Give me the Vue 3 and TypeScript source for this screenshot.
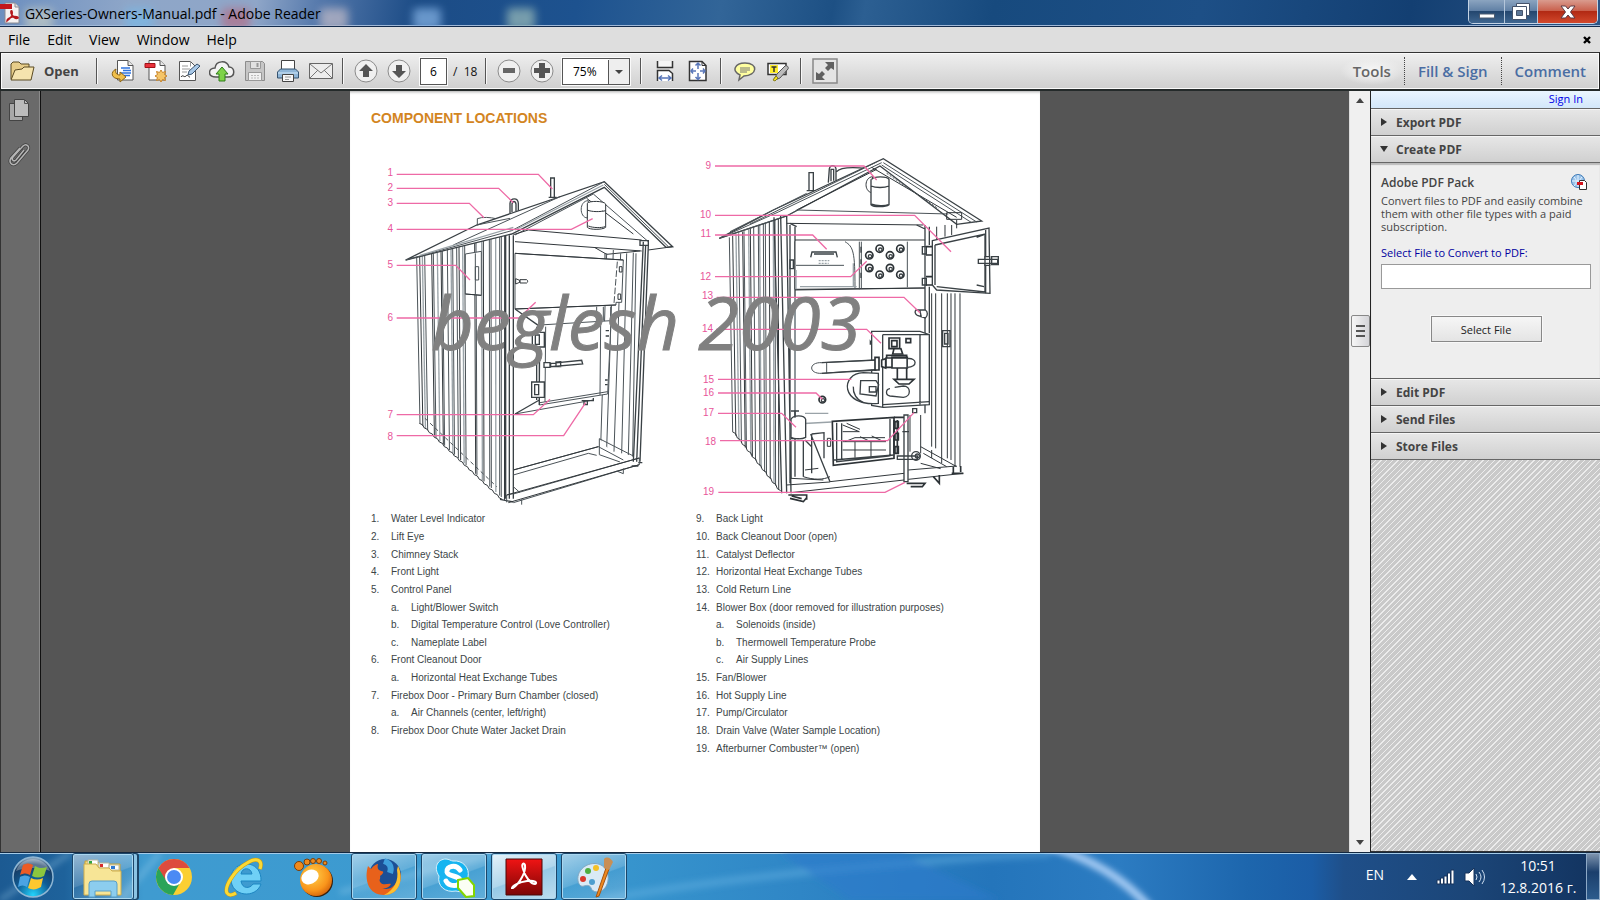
<script setup lang="ts">
import { ref } from 'vue'

type Line = [number, number, number, number]
interface Entry { mark: string; text: string; sub?: boolean }
interface Callout { n: number; x: number; y: number; pts: string }

const menus: string[] = ['File', 'Edit', 'View', 'Window', 'Help']
const page = ref('6')
const zoomLevel = ref('75%')
const fileName = ref('')

const e = (mark: string, text: string, sub = false): Entry => ({ mark, text, sub })

const leftList: Entry[] = [
  e('1.', 'Water Level Indicator'),
  e('2.', 'Lift Eye'),
  e('3.', 'Chimney Stack'),
  e('4.', 'Front Light'),
  e('5.', 'Control Panel'),
  e('a.', 'Light/Blower Switch', true),
  e('b.', 'Digital Temperature Control (Love Controller)', true),
  e('c.', 'Nameplate Label', true),
  e('6.', 'Front Cleanout Door'),
  e('a.', 'Horizontal Heat Exchange Tubes', true),
  e('7.', 'Firebox Door - Primary Burn Chamber (closed)'),
  e('a.', 'Air Channels (center, left/right)', true),
  e('8.', 'Firebox Door Chute Water Jacket Drain'),
]
const rightList: Entry[] = [
  e('9.', 'Back Light'),
  e('10.', 'Back Cleanout Door (open)'),
  e('11.', 'Catalyst Deflector'),
  e('12.', 'Horizontal Heat Exchange Tubes'),
  e('13.', 'Cold Return Line'),
  e('14.', 'Blower Box (door removed for illustration purposes)'),
  e('a.', 'Solenoids (inside)', true),
  e('b.', 'Thermowell Temperature Probe', true),
  e('c.', 'Air Supply Lines', true),
  e('15.', 'Fan/Blower'),
  e('16.', 'Hot Supply Line'),
  e('17.', 'Pump/Circulator'),
  e('18.', 'Drain Valve (Water Sample Location)'),
  e('19.', 'Afterburner Combuster™ (open)'),
]

const frontCallouts: Callout[] = [
  { n: 1, x: 393, y: 176, pts: '170,253 595,253 637,297' },
  { n: 2, x: 393, y: 191, pts: '170,295 476,295 520,338' },
  { n: 3, x: 393, y: 206, pts: '170,340 388,340 432,383' },
  { n: 4, x: 393, y: 232, pts: '170,418 694,418 758,386' },
  { n: 5, x: 393, y: 268, pts: '170,526 347,526 390,570' },
  { n: 6, x: 393, y: 321, pts: '170,684 537,684 587,637' },
  { n: 7, x: 393, y: 418, pts: '170,974 580,974 630,928' },
  { n: 8, x: 393, y: 440, pts: '170,1037 671,1037 737,938' },
]
const backCallouts: Callout[] = [
  { n: 9, x: 711, y: 169, pts: '75,108 522,108 560,150' },
  { n: 10, x: 711, y: 218, pts: '75,256 674,256 783,365' },
  { n: 11, x: 711, y: 237, pts: '75,315 368,315 410,358' },
  { n: 12, x: 711, y: 280, pts: '75,440 482,440 530,394' },
  { n: 13, x: 713, y: 299, pts: '80,502 642,502 690,548' },
  { n: 14, x: 713, y: 332, pts: '78,598 530,598 573,640' },
  { n: 15, x: 714, y: 383, pts: '84,748 484,748' },
  { n: 16, x: 714, y: 396, pts: '84,789 378,789 397,808' },
  { n: 17, x: 714, y: 416, pts: '84,850 275,850 318,892' },
  { n: 18, x: 716, y: 445, pts: '90,932 593,932 672,848' },
  { n: 19, x: 714, y: 495, pts: '85,1087 585,1087 645,1057' },
]

// Corrugated side walls: each x becomes a near-vertical rib between the eave and the sill.
const ribs = (xs: number[], x0: number, top: number, slopeTop: number, foot: number, squeeze: number, slopeFoot: number): Line[] =>
  xs.map((x) => {
    const d = x - x0
    return [x, top - d * slopeTop, x + 10 - d * squeeze, foot + d * slopeFoot]
  })

const frontRibs = ribs([230, 239, 247, 254, 275, 280, 292, 303, 307, 322, 333, 338, 350, 357, 368, 374, 404, 408, 425, 430, 448, 453, 467, 479, 484, 494], 230, 500, 0.24, 1000, 0.04, 0.87)
const backRibs = ribs([118, 128, 138, 146, 158, 162, 176, 181, 191, 205, 209, 220, 226, 238, 250, 255, 265], 118, 322, 0.42, 905, 0.06, 1.18)
const frontZig = Array.from({ length: 17 }, (_, i) => `${238 + i * 15},${1000 + i * 14} ${247 + i * 15},${1004 + i * 14}`).join(' ')
const backZig = Array.from({ length: 10 }, (_, i) => `${127 + i * 15},${905 + i * 19} ${137 + i * 15},${911 + i * 19}`).join(' ')
const tubes: [number, number][] = [[538, 376], [569, 356], [600, 376], [631, 356], [538, 414], [569, 434], [600, 414], [631, 434]]
</script>

<template>
  <div class="desktop">
    <header class="titlebar">
      <i class="glow g1"></i><i class="glow g2"></i><i class="glow g3"></i><i class="glow g4"></i><i class="glow g5"></i><i class="glow g6"></i>
      <svg class="doc-icon" width="21" height="22" viewBox="0 0 21 22">
        <path d="M5 1h10l4 4v16H5z" fill="#f4f1f1" stroke="#8a8a92" />
        <path d="M15 1v4h4" fill="#ddd" stroke="#8a8a92" />
        <path d="M0 2h12v5H0z" fill="#c3161c" />
        <path d="M7 19c4-3 6-7 5-10-1-1-2 1 0 4 2 3 4 4 6 3 1-1-3-2-6-1-3 1-5 3-5 4z" fill="none" stroke="#b5161b" stroke-width="1.5" />
      </svg>
      <h1>GXSeries-Owners-Manual.pdf - Adobe Reader</h1>
      <div class="win-buttons">
        <button aria-label="Minimize" class="wb"><svg width="18" height="18" viewBox="0 0 18 18"><rect x="1.500" y="11" width="15" height="4" fill="#fff" stroke="#4b5a70" /></svg></button>
        <button aria-label="Restore" class="wb"><svg width="20" height="20" viewBox="0 0 20 20"><path d="M5.500 1.500h13v12h-13z" fill="#fff" stroke="#46536a" /><path d="M1.500 4.500h14v13h-14z" fill="#fff" stroke="#46536a" /><path d="M5.500 8.500h6v5h-6z" fill="#5d7796" stroke="#46536a" /></svg></button>
        <button aria-label="Close" class="wb close"><svg width="20" height="18" viewBox="0 0 20 18"><path d="M3 3h4.500l2.500 3 2.500-3H17l-4.500 6L17 15h-4.500L10 12l-2.500 3H3l4.500-6z" fill="#fff" stroke="#5a3a44" /></svg></button>
      </div>
    </header>

    <nav class="menubar">
      <button v-for="m in menus" :key="m">{{ m }}</button>
      <button class="doc-close" aria-label="Close document"><svg width="8" height="8" viewBox="0 0 8 8"><path d="M1 1l6 6M7 1L1 7" stroke="#000" stroke-width="2.400" /></svg></button>
    </nav>

    <div class="toolbar">
      <button class="open">
        <svg width="26" height="24" viewBox="0 0 26 24"><path d="M2 20V5l2-2h6l2 2h8v4" fill="#e7cd8a" stroke="#5b4a22" /><path d="M2 21l4-10 7-1 2-2h10l-3 13z" fill="#f5e3ae" stroke="#5b4a22" /></svg>
        <span>Open</span>
      </button>
      <i class="sep"></i>
      <div class="tools">
        <button aria-label="Convert"><svg width="24" height="24" viewBox="0 0 24 24"><path d="M6.500 1.500H17l5 5V21H6.500z" fill="#fff" stroke="#555" /><path d="M17 1.500V6.500h5" fill="#e7e7e7" stroke="#555" /><path d="M10 9h9M12 11.500h8M10 14h10M13 16.500h6" stroke="#2f74e0" stroke-width="1.500" /><path d="M5 10c-6 3-5 10 4 10v3l6-5-6-5v3c-4 0-5-3-4-6z" fill="#f0c04c" stroke="#8b6216" /></svg></button>
        <button aria-label="Create PDF"><svg width="24" height="24" viewBox="0 0 24 24"><path d="M5 1.500h11l5 5V21H5z" fill="#fff" stroke="#555" /><path d="M16 1.500v5h5" fill="#e7e7e7" stroke="#555" /><path d="M1 4.500h10v4H1z" fill="#e8303a" stroke="#a01218" /><path d="M17 11l1.500 2.500 3-1-1 3 2.500 1.500-2.500 1.500 1 3-3-1L17 23l-1.500-2.500-3 1 1-3L11 17l2.500-1.500-1-3 3 1z" fill="#f5c568" stroke="#c9852a" /></svg></button>
        <button aria-label="Sign"><svg width="24" height="24" viewBox="0 0 24 24"><path d="M2.500 2.500h11l5 5v14h-16z" fill="#fff" stroke="#555" /><path d="M13.500 2.500v5" stroke="#999" /><path d="M5 7h6M5 10h8M5 13h5" stroke="#999" /><path d="M4 18c2-3 3 1 5-1s2 1 4 1" fill="none" stroke="#222" /><path d="M11 16l1-4 8-7 3 2-8 8z" fill="#a9c9e8" stroke="#39536f" /></svg></button>
        <button aria-label="Upload"><svg width="26" height="24" viewBox="0 0 26 24"><path d="M7 18c-9 0-8-9-1-9 1-8 12-8 14-1 6 0 7 10-1 10z" fill="#f3f3f3" stroke="#555" stroke-width="1.500" /><path d="M13 8l6 7h-3v7h-6v-7H7z" fill="#7ed348" stroke="#2f7c1b" /></svg></button>
        <button aria-label="Save"><svg width="24" height="24" viewBox="0 0 24 24"><path d="M2.500 2.500h17l2 2v17h-19z" fill="#c6c6c6" stroke="#8c8c8c" /><path d="M7.500 2.500h10v7h-10z" fill="#e2e2e2" stroke="#999" /><path d="M13.500 4v4h2V4z" fill="#999" /><path d="M5.500 13.500h13v8h-13z" fill="#f1f1f1" stroke="#999" /><path d="M8 16.500h8M8 19h8" stroke="#bbb" stroke-dasharray="2 1" /></svg></button>
        <button aria-label="Print"><svg width="24" height="24" viewBox="0 0 24 24"><path d="M5.500 1.500h13v9h-13z" fill="#fff" stroke="#444" /><path d="M1.500 13l3-3h15l3 3v6h-21z" fill="#8fb6d8" stroke="#35536f" /><path d="M2 14h20" stroke="#d3e8f8" /><path d="M6.500 15.500h11v7h-11z" fill="#f7f7f7" stroke="#444" /><path d="M9 18h6M9 20.500h4" stroke="#999" /></svg></button>
        <button aria-label="Email"><svg width="26" height="24" viewBox="0 0 26 24"><path d="M1.500 4.500h23v15h-23z" fill="#ededed" stroke="#666" /><path d="M2 5l11 9 11-9M2 19l8-8M24 19l-8-8" fill="none" stroke="#777" /></svg></button>
      </div>
      <i class="sep"></i>
      <div class="tools">
        <button aria-label="Previous page"><svg width="24" height="24" viewBox="0 0 24 24"><circle cx="12" cy="12" r="11" fill="#f0f0f0" stroke="#8b8b8b" /><path d="M12 5l7 7h-4v6H9v-6H5z" fill="#555" /></svg></button>
        <button aria-label="Next page"><svg width="24" height="24" viewBox="0 0 24 24"><circle cx="12" cy="12" r="11" fill="#f0f0f0" stroke="#8b8b8b" /><path d="M12 19l7-7h-4V6H9v6H5z" fill="#555" /></svg></button>
      </div>
      <input v-model="page" class="page-no" aria-label="Page number" />
      <span class="page-of">/&nbsp; 18</span>
      <i class="sep"></i>
      <div class="tools">
        <button aria-label="Zoom out"><svg width="24" height="24" viewBox="0 0 24 24"><circle cx="12" cy="12" r="11" fill="#f0f0f0" stroke="#8b8b8b" /><path d="M6 9h12v5H6z" fill="#666" /></svg></button>
        <button aria-label="Zoom in"><svg width="24" height="24" viewBox="0 0 24 24"><circle cx="12" cy="12" r="11" fill="#f0f0f0" stroke="#8b8b8b" /><path d="M4 9h5V4h6v5h5v5h-5v5H9v-5H4z" fill="#555" /></svg></button>
      </div>
      <div class="zoom">
        <select v-model="zoomLevel" aria-label="Zoom level"><option>75%</option><option>100%</option></select>
        <svg width="22" height="24" viewBox="0 0 22 24"><path d="M0 0v24" stroke="#555" stroke-width="2" /><path d="M7 10h8l-4 4z" fill="#444" /></svg>
      </div>
      <i class="sep wide"></i>
      <div class="tools">
        <button aria-label="Fit width"><svg width="18" height="24" viewBox="0 0 18 24"><path d="M1.500 2v6.500h15V2" fill="#f5f5f5" stroke="#333" stroke-width="1.500" /><path d="M1.500 22V11.500H13l3.500 3V22" fill="#fff" stroke="#333" stroke-width="1.500" /><path d="M3 19h12M6 16.500L3 19l3 2.500M12 16.500l3 2.500-3 2.500" fill="none" stroke="#5876b8" stroke-width="1.500" /></svg></button>
        <button aria-label="Fit page"><svg width="20" height="24" viewBox="0 0 20 24"><path d="M1.500 2.500H14l4 4v15H1.500z" fill="#fff" stroke="#333" stroke-width="1.500" /><path d="M14 2.500v4h4" fill="none" stroke="#333" /><path d="M10 4v6M10 14v6M3 12h5M12 12h5M7.500 6.500L10 4l2.500 2.500M7.500 18l2.500 2.500 2.500-2.500M5 9.500L3 12l2 2.500M15 9.500l2 2.500-2 2.500" fill="none" stroke="#5876b8" stroke-width="1.500" /></svg></button>
      </div>
      <i class="sep wide"></i>
      <div class="tools">
        <button aria-label="Comment note"><svg width="22" height="24" viewBox="0 0 22 24"><path d="M11 4c14 0 12 13-1 13l-5 4 1-5C-3 12 1 4 11 4z" fill="#ffffa0" stroke="#666" stroke-width="1.500" /><path d="M6 9h10M6 11h10M6 13h7" stroke="#777" /></svg></button>
        <button aria-label="Highlight text"><svg width="24" height="24" viewBox="0 0 24 24"><path d="M2 4.500h18v11H2z" fill="#fff" stroke="#333" stroke-width="1.500" /><path d="M4 6h8v8H4z" fill="#ffee2e" /><path d="M5.500 8h5M8 8v5" stroke="#333" stroke-width="1.500" /><path d="M8 20l3-5 8-8c2-1 4 1 3 3l-8 9-5 2z" fill="#bbb" stroke="#555" /><path d="M7 21l3-4 2 2-3 3z" fill="#f6e020" stroke="#86801c" /></svg></button>
      </div>
      <i class="sep wide"></i>
      <div class="tools">
        <button aria-label="Read mode"><svg width="26" height="26" viewBox="0 0 26 26"><path d="M1 1h24v24H1z" fill="#e4e4e4" stroke="#888" stroke-width="1.500" /><path d="M22 4v8l-3-2-3 3-3-3 3-3-3-3zM4 22v-8l3 2 3-3 3 3-3 3 3 3z" fill="#606060" /></svg></button>
      </div>
      <div class="modes">
        <button class="active">Tools</button><button>Fill &amp; Sign</button><button>Comment</button>
      </div>
    </div>

    <main class="workspace">
      <aside class="rail">
        <button aria-label="Page thumbnails"><svg width="24" height="26" viewBox="0 0 24 26"><path d="M2.500 6.500h13v17h-13z" fill="#a8a8a8" stroke="#444" /><path d="M7.500 2.500h10l4 4v13h-14z" fill="#bcbcbc" stroke="#444" /><path d="M17.500 2.500v4h4" fill="none" stroke="#555" /></svg></button>
        <button aria-label="Attachments"><svg width="24" height="26" viewBox="0 0 24 26"><path d="M17 9l-8 10c-2 2-5 0-3-3L16 5c3-3 7 0 5 4L10 22c-4 4-9 0-6-5l9-10" fill="none" stroke="#3f3f3f" stroke-width="3" /><path d="M17 9l-8 10c-2 2-5 0-3-3L16 5c3-3 7 0 5 4L10 22c-4 4-9 0-6-5l9-10" fill="none" stroke="#b5b5b5" stroke-width="1.500" /></svg></button>
      </aside>

      <div class="canvas">
        <article class="sheet">
          <h2>COMPONENT LOCATIONS</h2>
          <svg class="figure" viewBox="350 140 690 370" role="img" aria-label="Front and back views of the furnace">
            <g class="ink" transform="translate(340 90) scale(0.33333)">
              <line v-for="(l, i) in frontRibs" :key="i" :x1="l[0]" :y1="l[1]" :x2="l[2]" :y2="l[3]" :class="{ bold: i % 3 === 1, soft: i % 4 === 2 }" />
              <polyline :points="frontZig" class="bold" />
              <path d="M255 985L470 1190" stroke-dasharray="12 9" />
              <path class="paper" d="M376 492L424 484 424 616 376 612zM406 530h10v40h-10zM406 490v122" />
              <path d="M376 612l48 4" class="bold" />
              <path d="M412 408v-22c15-6 40-4 56 0" />
              <path d="M510 372v-32c2-18 24-18 25 0v28M516 366v-24c2-10 10-10 12 0v22" class="heavy" />
              <path class="paper heavy" d="M632 322v-58h11v58zM626 322h24" />
              <path class="paper heavy" d="M197 510L410 405 793 275 998 470 978 472 793 292 515 432z" />
              <path d="M197 510L515 422 793 275M340 465L660 320M410 405L510 385M793 283L985 470M760 312L925 455M525 435L760 312" />
              <path class="soft" d="M525 420L790 285M240 496L520 412" />
              <path class="bold" d="M740 325L880 432M925 480L998 470" />
              <path class="paper" d="M745 332c-28 0-28 50-3 52z" />
              <path class="paper bold" d="M742 340c4-8 50-8 55 2v70c-10 8-48 8-55 0zM742 360c12 6 40 6 55 2M745 408c14 6 40 6 50 2" />
              <path d="M565 420L905 450M525 455L905 483M565 420l-45 14M765 473l35 20 100-10M795 490v18" class="bold" />
              <path class="heavy" d="M497 436v790M520 436v790M508 436v790M480 1228l40 8" />
              <path d="M910 455L880 1115M925 465L900 1115M917 465L890 1115" class="heavy" />
              <path d="M900 452h25v14h-25zM895 1118h12M875 1128h20" class="heavy" />
              <path d="M800 490L782 1070M820 480L800 1075M842 490L822 1085M860 490L845 1090M880 488L865 1095M888 490L878 1100M770 650v42M790 650v42M812 650v42" />
              <path class="paper" d="M525 490L850 510 845 637 828 637 828 645 525 657z" />
              <path d="M525 490L850 510M525 657L828 645" class="bold" />
              <path d="M832 515L822 640" stroke-dasharray="20 6" />
              <path d="M838 530h8v16h-8zM834 612h8v16h-8z" class="bold" />
              <path class="paper bold" d="M527 566l12 5v6l-12 5zM540 569h20c4 2 4 8 0 10h-20z" />
              <path class="paper" d="M600 705L813 692 803 912 598 945z" />
              <path d="M782 700L780 915M525 972L760 930M600 938L803 905M617 710L615 935" />
              <path class="heavy" d="M525 657L600 710M525 972L598 930M590 710V930M598 705V945" />
              <path class="paper heavy" d="M577 727h36v44h-36zM586 735h12v28h-12zM575 876h38v46h-38zM584 884h12v30h-12z" />
              <path class="paper heavy" d="M612 818h18v14h-18zM632 820L725 811 728 822 632 830zM648 816h14v14h-14z" />
              <path d="M797 722h10M797 738h10M795 870h8M795 884h8M725 932h35v-8M732 932v12h10v-12" class="heavy" />
              <path class="paper" d="M520 1140L775 1070M520 1155L745 1090 770 1096M520 1212L898 1104M520 1238L898 1124M898 1104v20M778 1046L880 1098M778 1046v48L840 1116M775 1070L850 1110M500 1215l20-4M500 1215v22" />
              <path d="M520 1140L775 1070M500 1215L898 1104M505 1238L898 1124" class="bold" />
              <path d="M545 1228v16M850 1135v16l-20-8M520 1190l20 18" />
            </g>

            <g class="ink" transform="translate(690 130) scale(0.33333)">
              <line v-for="(l, i) in backRibs" :key="i" :x1="l[0]" :y1="l[1]" :x2="l[2]" :y2="l[3]" :class="{ bold: i % 3 === 1, soft: i % 4 === 2 }" />
              <polyline :points="backZig" class="bold" />
              <path d="M415 158l3-42c3-12 17-12 20 0v36M423 154v-36h8v34M440 125c10-14 50-14 90-10" class="heavy" />
              <path class="paper heavy" d="M357 182v-54h13v54zM350 182h26" />
              <path class="paper heavy" d="M88 325L250 240 580 86 875 273 800 283 570 108 290 258z" />
              <path d="M88 325L265 246 575 98M88 325L290 258M120 305L350 190M180 282L560 96M580 98L860 276M575 105L845 278" />
              <path d="M545 112L800 262M320 240L560 118" class="bold" />
              <path d="M590 130L745 236" stroke-dasharray="6 5" />
              <path d="M320 240L775 252M290 258l40-22" />
              <path class="paper bold" d="M548 140c-26 2-26 44-3 48z" />
              <path class="paper heavy" d="M545 148c6-10 46-10 52 0v76c-10 8-46 8-54 0v-76M543 168c14 6 40 6 54 0M545 222c14 6 40 6 50 2" />
              <path d="M770 248h45v20h-45z" class="bold" />
              <path d="M252 262L275 1090M272 258L290 1090M290 258L303 1090M300 285V1060M315 290V1040" class="heavy" />
              <path class="paper bold" d="M290 280L700 285M315 330H705M315 334V478L705 474M315 480L705 474" />
              <path d="M300 280l20 10M680 285l25 12M705 285V850M718 290V345M718 470V610" class="heavy" />
              <path d="M318 406H462M465 335c25 15 30 30 30 140M508 335V478M514 335V475M652 335V472" />
              <path class="soft" d="M318 420V478M330 470H500M315 500V840M490 400V470" />
              <path class="heavy" d="M362 382l4-16h72l4 16M364 376l-2 6M372 372h60M513 350v18M513 388v14M513 428v16" />
              <path d="M386 392h32M386 400h30" class="soft" stroke-dasharray="6 3" />
              <g v-for="(t, i) in tubes" :key="i">
                <circle :cx="t[0]" :cy="t[1]" r="11" class="thick" /><circle :cx="t[0] + 2" :cy="t[1] + 3" r="5" class="heavy" />
              </g>
              <path d="M300 390h10v26h-10zM697 350h12v22h-12zM697 445h12v20h-12z" class="heavy" />
              <path d="M725 490V950M737 490V955M755 490V975M772 490V985M783 490V990M795 490V1010M810 490V1010M740 290v40M765 285v35M785 285v30M800 270v25" class="bold" />
              <path d="M758 602h22v48h-22zM764 610h10v32h-10z" class="heavy" />
              <path class="paper heavy" d="M727 332L897 294 900 490 740 480 727 465z" />
              <path d="M735 345L885 312 885 484M740 470L885 486M887 300V490M735 345v120M860 322l22-8M860 465l22 5" class="heavy" />
              <path d="M708 350h18M708 375h18M708 440h18M708 465h18" class="thick" />
              <path class="paper heavy" d="M865 388h58v12h-58zM885 380h14v26h-14zM905 380h20v24h-20z" />
              <path class="paper heavy" d="M678 540l28 0c8 4 8 18 0 24l-24-8c-8-4-8-12-4-16zM690 542l4 20" />
              <path class="paper heavy" d="M545 604H690L718 614V824L580 832 545 826z" />
              <path d="M578 614L718 614M578 614V832M690 614V824M600 604h30M580 824L718 815M545 640l-4-6v10" class="heavy" />
              <path class="paper thick" d="M597 624h32v32h-32zM605 632h16v18h-16zM648 626h14v12h-14zM612 656l-4 16h30l-6-18" />
              <path class="paper" d="M395 698L560 690V718L395 730c-40 2-40-34 0-32zM410 698v32" />
              <path d="M395 698L560 690M395 730L560 720" class="heavy" />
              <path class="paper thick" d="M555 682h12v38h-12zM575 690l12-4v28l-12-4zM588 684h18v28h-18zM606 682h46v32h-46zM590 676h60v8h-60zM622 714h28v34h-28zM612 748h60l-15 14h-30z" />
              <path class="paper heavy" d="M652 686c30-4 32 26 0 26zM600 776c-14 2-14 20 0 22l40 4c24-2 24-34 0-34l-26 4" />
              <path class="paper heavy" d="M565 730V820C450 830 450 730 520 728z" />
              <path d="M490 770c-2 20 10 40 30 48M512 752h46l8 12-8 34-48-6zM538 770h20v16h-20z" class="heavy" />
              <circle cx="397" cy="809" r="10" class="thick" /><circle cx="399" cy="811" r="5" class="heavy" />
              <path d="M668 836h12v12h-12z" class="heavy" />
              <path d="M315 882L425 876M345 850h70" class="soft" />
              <path class="paper heavy" d="M303 868c6-14 40-14 44 0v54c-10 6-36 6-44 0zM303 843h24M315 843v20M303 926h24" />
              <path d="M303 930V1045M340 930V1040M362 912L420 1055M365 912L402 908V985M365 912V1030M345 930l20 20" class="heavy" />
              <path d="M412 925h10v24h-10z" class="bold" />
              <path class="paper thick" d="M427 874L612 862V985L430 1006z" />
              <path d="M440 878V995L600 978V866M455 880V988M430 990L612 975" class="heavy" />
              <path d="M458 935h130M458 960h130M495 935v48M543 935v45M465 935l30-12h90M458 885l50 20h-50M470 880l40 18M510 920l30 14M545 918l30 14" class="bold" />
              <path class="thick" d="M612 862h30M612 870v100M622 870v100M615 875h10v20h-10zM615 910h10v20h-10zM615 950h10v20h-10z" />
              <path class="paper heavy" d="M642 855h12v200h-12zM637 905h20M622 978h60v10h-60z" />
              <circle cx="678" cy="978" r="13" class="heavy" /><circle cx="682" cy="978" r="6" class="heavy" />
              <path d="M692 855V970M660 855v110M692 950L800 1010M700 970L770 1010M725 960v24M755 975v24M692 1000l60 16" class="bold" />
              <path class="bold" d="M290 1065L420 1056M303 1088L642 1050M655 1048L820 1030M420 1055L642 1030M303 1045L400 1050M340 1040c30 10 60 10 80 0M655 1020L800 1008M345 1020l40-5" />
              <path d="M295 1095h55v14M300 1105l40 10 10-12M305 1098l30 8M650 1060h55l-8 10h-35M730 1040l18 20v-25M785 1030h35M790 1010v20M812 1008v18" class="thick" />
            </g>

            <g class="leaders">
              <polyline v-for="c in frontCallouts" :key="c.n" :points="c.pts" transform="translate(340 90) scale(0.33333)" />
              <polyline v-for="c in backCallouts" :key="c.n" :points="c.pts" transform="translate(690 130) scale(0.33333)" />
            </g>
            <text class="watermark" x="431" y="350">beglesh 2003</text>
            <g class="leaders">
              <text v-for="c in [...frontCallouts, ...backCallouts]" :key="c.n" :x="c.x" :y="c.y">{{ c.n }}</text>
            </g>
          </svg>
          <div class="columns">
            <ul>
              <li v-for="(r, i) in leftList" :key="i" :class="{ sub: r.sub }"><span>{{ r.mark }}</span>{{ r.text }}</li>
            </ul>
            <ul>
              <li v-for="(r, i) in rightList" :key="i" :class="{ sub: r.sub }"><span>{{ r.mark }}</span>{{ r.text }}</li>
            </ul>
          </div>
        </article>
      </div>

      <div class="scroll">
        <button aria-label="Scroll up"><svg width="8" height="5" viewBox="0 0 8 5"><path d="M4 0l4 5H0z" fill="#444" /></svg></button>
        <div class="track"><div class="thumb"><i></i><i></i><i></i></div></div>
        <button aria-label="Scroll down"><svg width="8" height="5" viewBox="0 0 8 5"><path d="M4 5l4-5H0z" fill="#444" /></svg></button>
      </div>

      <aside class="panel">
        <div class="signin"><a href="#">Sign In</a></div>
        <button class="fold"><svg width="10" height="10" viewBox="0 0 10 10"><path d="M1 1l6 4-6 4z" fill="#333" /></svg>Export PDF</button>
        <button class="fold opened"><svg width="10" height="10" viewBox="0 0 10 10"><path d="M0 2h8L4 8z" fill="#333" /></svg>Create PDF</button>
        <section class="pack">
          <div class="pack-head">
            <h3>Adobe PDF Pack</h3>
            <svg width="17" height="17" viewBox="0 0 17 17"><circle cx="7" cy="7" r="6.500" fill="#9cc4ea" stroke="#3b78b5" /><path d="M1 7h12M7 1v12M3 3c3 3 3 6 0 9M11 3c-3 3-3 6 0 9" fill="none" stroke="#e6f3ff" /><path d="M8.500 6.500h5l2 2v7h-7z" fill="#fff" stroke="#333" /><path d="M6 8h6v3H6z" fill="#d4141c" /></svg>
          </div>
          <p>Convert files to PDF and easily combine them with other file types with a paid subscription.</p>
          <label for="source">Select File to Convert to PDF:</label>
          <input id="source" v-model="fileName" />
          <button class="choose">Select File</button>
        </section>
        <button v-for="t in ['Edit PDF', 'Send Files', 'Store Files']" :key="t" class="fold"><svg width="10" height="10" viewBox="0 0 10 10"><path d="M1 1l6 4-6 4z" fill="#333" /></svg>{{ t }}</button>
        <div class="hatch"></div>
      </aside>
    </main>

    <footer class="taskbar">
      <svg class="aurora" viewBox="0 0 1600 48" preserveAspectRatio="none">
        <defs><filter id="soft"><feGaussianBlur stdDeviation="3" /></filter></defs>
        <g filter="url(#soft)">
          <path d="M600 48Q760 18 1050 0" fill="none" stroke="#6fb8e6" stroke-opacity=".4" stroke-width="8" />
          <path d="M780 0L850 48H1000L900 0z" fill="#2b7ccb" fill-opacity=".6" />
          <path d="M1045-8Q1110 10 1150 56" fill="none" stroke="#a9cdf5" stroke-width="8" />
          <path d="M0 48L70 0M120 48L160 0M340 40Q420 20 500 0" fill="none" stroke="#a9d6f2" stroke-opacity=".35" stroke-width="5" />
        </g>
      </svg>
      <button class="start" aria-label="Start">
        <svg width="44" height="44" viewBox="0 0 44 44">
          <defs>
            <radialGradient id="orb" cx=".5" cy=".95" r=".95"><stop offset="0" stop-color="#23d3fb" /><stop offset=".45" stop-color="#0f5c96" /><stop offset=".8" stop-color="#173b62" /><stop offset="1" stop-color="#9db7cc" /></radialGradient>
          </defs>
          <circle cx="22" cy="22" r="20" fill="url(#orb)" stroke="#8fb6d3" stroke-width="1.500" />
          <path d="M5 16c6-16 28-16 34 0-8-4-26-4-34 0z" fill="#fff" fill-opacity=".3" />
          <path d="M12 10c4-2 7-2 10 0l-3 10c-3-2-6-2-10 0z" fill="#ec5b25" />
          <path d="M24 11c3 2 7 3 12 1l-3 9c-4 2-8 2-12 0z" fill="#8cc63e" />
          <path d="M9 22c4-2 7-2 10 0l-3 10c-3-2-6-2-9 0z" fill="#4aa3e3" />
          <path d="M20 23c4 2 8 2 12 0l-2 9c-5 3-9 3-13 1z" fill="#fdc82f" />
        </svg>
      </button>
      <button class="task framed stacked" aria-label="Explorer">
        <svg width="42" height="42" viewBox="0 0 42 42"><path d="M3 5h12l3 3h20v10H3z" fill="#f3d978" stroke="#c4a03f" /><path d="M6 4h10v5H6zM17 7h10v5H17zM27 9h10v5H27z" fill="#fff" stroke="#b9b9a0" /><path d="M7 5h3v3H7z" fill="#30a640" /><path d="M18 8h3v3h-3z" fill="#d62b2b" /><path d="M29 10h4v3h-4z" fill="#2f79d0" /><path d="M2 8h12l3 4h10l3 3h9v24H2z" fill="#f7e596" stroke="#d0ae4d" /><path d="M7 41V28q0-3 3-3h22q3 0 3 3v13h-6v-6H13v6z" fill="#8ccdee" stroke="#5a9fc7" /></svg>
      </button>
      <button class="task" aria-label="Chrome">
        <svg width="38" height="38" viewBox="0 0 38 38"><circle cx="19" cy="19" r="18" fill="#fbcf33" /><path d="M3.400 10A18 18 0 0 1 34.600 10H19z" fill="#dd4b3e" /><path d="M3.400 10A18 18 0 0 0 18 37l8-14-14-2z" fill="#2aa459" /><path d="M19 10H3.400l8 13z" fill="#dd4b3e" /><circle cx="19" cy="19" r="9" fill="#fff" /><circle cx="19" cy="19" r="7" fill="#4a8af4" /></svg>
      </button>
      <button class="task" aria-label="Internet Explorer">
        <svg width="42" height="42" viewBox="0 0 42 42"><path d="M38 25H18c1 8 9 8 12 3h8C33 43 8 41 8 23 8 3 39 2 38 25zM18 18h11c-1-7-10-7-11 0z" fill="#6fd0f6" stroke="#1d86c2" /><path d="M37 13c3-9-3-12-13-6C11 14 1 31 4 37c2 3 6 2 9 0" fill="none" stroke="#c59a18" stroke-width="4" /><path d="M37 13c3-9-3-12-13-6C11 14 1 31 4 37c2 3 6 2 9 0" fill="none" stroke="#fbd934" stroke-width="3" /></svg>
      </button>
      <button class="task" aria-label="Media player">
        <svg width="42" height="42" viewBox="0 0 42 42"><defs><radialGradient id="gom" cx=".4" cy=".35" r=".8"><stop offset="0" stop-color="#ffd14a" /><stop offset=".6" stop-color="#f9951b" /><stop offset="1" stop-color="#c34d05" /></radialGradient></defs><circle cx="24" cy="25" r="16" fill="#39220e" /><circle cx="23" cy="24" r="16" fill="url(#gom)" /><ellipse cx="17" cy="21" rx="9" ry="7" fill="#fff" transform="rotate(-25 17 21)" /><g fill="#f08a1c" stroke="#7a3d08"><circle cx="6" cy="10" r="4.500" /><circle cx="14" cy="6" r="3" /><circle cx="20" cy="5" r="2.500" /><circle cx="26" cy="5" r="2.500" /><circle cx="32" cy="7" r="2" /></g></svg>
      </button>
      <button class="task framed" aria-label="Firefox">
        <svg width="40" height="40" viewBox="0 0 40 40"><circle cx="21" cy="18" r="16" fill="#1c4f96" /><path d="M20 4c6 2 8 6 6 12" stroke="#3f9edb" stroke-width="6" fill="none" /><path d="M34 9c6 12 2 29-14 29C4 38 0 22 4 9l3 3c3-4 6-5 7-5-1 4 0 6 3 7 4 0 2 3-1 5 1 3-2 4 1 7 3 3 7 0 10 1-2 4-6 5-9 4 10 4 19-6 16-22z" fill="#e8611b" /><path d="M34 9c6 12 2 29-14 29 10-5 15-14 13-25z" fill="#fcc02f" /></svg>
      </button>
      <button class="task framed" aria-label="Skype">
        <svg width="42" height="42" viewBox="0 0 42 42"><path d="M13 3c3 0 5 2 7 2 10-1 17 7 15 16 4 9-2 17-12 14C12 37 4 30 6 20 0 11 5 3 13 3z" fill="#16b4f0" stroke="#d8f1fc" /><path d="M27 14c-4-6-14-4-13 2 1 5 13 3 13 9s-11 6-14 0" fill="none" stroke="#fff" stroke-width="5" stroke-linecap="round" /><path d="M25 24l10-2 6 7v11l-8 1-8-9z" fill="#fbfff4" stroke="#83d600" stroke-width="2" /></svg>
      </button>
      <button class="task framed lit" aria-label="Adobe Reader">
        <svg width="38" height="38" viewBox="0 0 38 38"><defs><linearGradient id="acro" x1="0" y1="0" x2="0" y2="1"><stop offset="0" stop-color="#f01414" /><stop offset="1" stop-color="#7c0505" /></linearGradient></defs><path d="M1 1h36v36H1z" fill="url(#acro)" stroke="#4b0909" /><path d="M8 30c7-5 13-16 12-23-1-3-4-1-2 4 2 8 8 15 12 15 3-1 0-4-8-3-8 1-15 5-15 7z" fill="none" stroke="#fff" stroke-width="2" /></svg>
      </button>
      <button class="task framed" aria-label="Paint">
        <svg width="42" height="42" viewBox="0 0 42 42"><path d="M5 25C3 12 18 4 28 9c9 5 9 18 3 24-5 5-12 3-13-1-1-3-4-3-7-2s-5-1-6-5z" fill="#d9eaf5" stroke="#7fa6c1" /><circle cx="10" cy="23" r="3" fill="#d8392d" /><circle cx="15" cy="15" r="3" fill="#4fae3f" /><circle cx="23" cy="12" r="3" fill="#f4c026" /><circle cx="19" cy="26" r="3" fill="#4d9fcf" /><path d="M33 12l3 1-10 27-3 1z" fill="#ee8a20" stroke="#a55310" /><path d="M31 3c3-3 7-1 9 3l-4 8-5-2z" fill="#c98f55" /></svg>
      </button>
      <div class="tray">
        <span class="lang">EN</span>
        <svg width="10" height="6" viewBox="0 0 10 6"><path d="M5 0l5 6H0z" fill="#fff" /></svg>
        <svg width="18" height="16" viewBox="0 0 18 16"><path d="M1 11h3v4H1zM4.500 9h3v6h-3zM8 7h3v8H8zM11.500 4h3v11h-3zM15 1h3v14h-3z" fill="#fff" stroke="#16335a" /></svg>
        <svg width="22" height="20" viewBox="0 0 22 20"><path d="M1 6h4l5-5v18l-5-5H1z" fill="#fff" stroke="#16335a" /><path d="M12 7q2 3 0 6M15 5q4 5 0 10M18 3q5 7 0 14" fill="none" stroke="#cfe0f2" /></svg>
        <time>10:51<br />12.8.2016 г.</time>
        <button class="peek" aria-label="Show desktop"></button>
      </div>
    </footer>
  </div>
</template>

<style>
html, body { margin: 0; height: 100%; }
#app { height: 100%; }
</style>

<style scoped>
* { box-sizing: border-box; }
button { font: inherit; color: inherit; background: none; border: 0; padding: 0; margin: 0; }
svg { display: block; flex: none; }
.desktop {
  display: grid; grid-template-rows: 27px 25px 38px minmax(0, 1fr) 48px;
  height: 100vh; overflow: hidden; font-family: 'Open Sans', 'Noto Sans', sans-serif; font-size: 14px; color: #000; background: #555;
}
.titlebar {
  position: relative; display: flex; align-items: center; overflow: hidden;
  background: linear-gradient(100deg, #6c8fbf 0, #8ea6c8 8%, #8fa6c8 16%, #5478ab 20%, #1c4c86 26%, #1d528f 36%, #326598 45%, #1d5084 52%, #2c5f92 54%, #174a7e 62%, #1d4f86 75%, #133f72 88%, #2c5585 100%);
  border-bottom: 1px solid #132b4c; box-shadow: inset 0 -1px #9fb8d8;
}
.glow { position: absolute; top: 8px; width: 28px; height: 22px; filter: blur(4px); border-radius: 4px; opacity: .8; }
.g1 { left: 25px; background: #b9c4c4; }
.g2 { left: 125px; background: #7cb6e2; }
.g3 { left: 222px; background: #ae7590; }
.g4 { left: 320px; background: #b4b3c4; }
.g5 { left: 413px; background: #7ba9dc; }
.g6 { left: 507px; background: #8db0b4; }
.doc-icon { position: relative; }
.titlebar h1 { position: relative; margin: 0 0 0 4px; padding-top: 1px; font-size: 14px; font-weight: 400; line-height: 26px; white-space: nowrap; }
.win-buttons { position: relative; display: flex; align-self: flex-start; margin: 0 2px 0 auto; height: 24px; border: 1px solid #c4d3e4; border-top: 0; border-radius: 0 0 5px 5px; overflow: hidden; }
.wb { width: 36px; display: grid; place-items: center; background: linear-gradient(#8ba4c0 0, #5f7fa4 48%, #24476f 50%, #3f6690 100%); border-right: 1px solid #b4c6da; }
.wb:nth-child(2) { width: 33px; }
.wb.close { width: 59px; border: 0; background: linear-gradient(#d99b8e 0, #c95f4b 48%, #b22a14 50%, #d2482c 100%); }
.menubar { display: flex; align-items: center; gap: 17px; padding: 0 9px 0 8px; background: #dedede; line-height: 24px; }
.doc-close { margin-left: auto; }
.toolbar {
  display: flex; align-items: center; border: 1px solid #222; border-bottom-color: #242a2a; border-top-color: #333;
  background: linear-gradient(#efefef, #cfcfcf); box-shadow: inset 0 0 0 1px #fafafa; color: #111; font-size: 12px; padding-left: 8px;
}
.open { display: flex; align-items: center; gap: 9px; width: 87px; font-weight: 700; font-size: 13px; color: #444; }
.sep { width: 2px; height: 26px; margin: 0 5px; flex: none; background: #555; border-right: 1px solid #f8f8f8; }
.sep.wide { margin: 0 6px; }
.open + .sep { margin: 0 8px 0 0; }
.tools { display: flex; }
.tools button { width: 33px; height: 28px; display: grid; place-items: center; }
.page-no { width: 27px; height: 27px; margin-left: 5px; border: 1px solid #555; outline: 1px solid #fafafa; background: #fff; text-align: center; font: inherit; padding: 0; }
.page-of { width: 33px; padding-left: 6px; white-space: nowrap; }
.zoom { position: relative; margin: 0 4px; }
.zoom select { appearance: none; width: 68px; height: 27px; border: 1px solid #555; border-radius: 0; outline: 1px solid #fafafa; background: linear-gradient(90deg, #fff 46px, #eee 46px); padding: 0 0 0 10px; font: inherit; color: #000; display: block; }
.zoom svg { position: absolute; right: 0; top: 2px; pointer-events: none; }
.modes { margin-left: auto; display: flex; font-size: 15px; font-weight: 600; color: #4a6da3; }
.modes button { padding: 0 13px; line-height: 28px; }
.modes button + button { border-left: 1px dotted #444; }
.modes .active { color: #666; background: radial-gradient(closest-side, #f8f8f8, transparent); }

.workspace { display: grid; grid-template-columns: 41px minmax(0, 1fr) 21px 230px; min-height: 0; border-top: 1px solid #242a2a; }
.rail { background: #6a6a6a; border-right: 1px solid #111; border-left: 1px solid #333; padding: 6px 0 0 6px; box-shadow: inset -1px 0 #8a8a8a; }
.rail button { display: block; margin-bottom: 18px; }
.canvas { background: #555; overflow: hidden; display: flex; justify-content: center; }
.sheet { width: 690px; flex: none; background: #fff; padding: 19px 0 0; font-family: 'Liberation Sans', Arial, sans-serif; box-shadow: inset 0 3px 3px -2px #aaa; }
.sheet h2 { margin: 0 0 0 21px; font-size: 14px; line-height: 16px; color: #d3851f; }
.figure { width: 100%; height: auto; margin-top: 14px; }
.ink { fill: none; stroke: #4a5257; stroke-width: 3; }
.ink .paper { fill: #fff; }
.ink .bold { stroke: #30363a; stroke-width: 3; }
.ink .heavy { stroke: #3a4145; stroke-width: 4; }
.ink .thick { stroke: #2c3236; stroke-width: 5; }
.ink .soft { stroke: #9aa3a8; stroke-width: 4; }
.leaders polyline { fill: none; stroke: #ee6aa6; stroke-width: 4; }
.leaders text { fill: #e8559a; font-size: 10px; text-anchor: end; }
.watermark { font: italic 400 74px 'Open Sans', 'Noto Sans', sans-serif; fill: #808080; stroke: #808080; stroke-width: 1; }
.columns { display: grid; grid-template-columns: 325px 1fr; margin-left: 21px; font-size: 10px; color: #3c4547; }
.columns ul { list-style: none; margin: 0; padding: 0; height: 247px; display: grid; grid-template-rows: repeat(14, 1fr); }
.columns li { display: flex; align-items: center; white-space: nowrap; }
.columns li.sub { padding-left: 20px; }
.columns li span { width: 20px; }

.scroll { display: flex; flex-direction: column; align-items: center; background: #f0f0f0; border-left: 1px solid #ddd; }
.scroll button { height: 19px; display: grid; place-items: center; }
.track { flex: 1; width: 100%; display: grid; grid-template-rows: 205px 32px; justify-items: center; }
.thumb { grid-row: 2; width: 19px; border: 1px solid #888; border-radius: 2px; background: linear-gradient(90deg, #f6f6f6, #d4d4d8); display: flex; flex-direction: column; justify-content: center; align-items: center; gap: 3px; }
.thumb i { width: 9px; height: 2px; background: #555; }

.panel { display: flex; flex-direction: column; border-left: 1px solid #222; background: #eee; color: #444; font-size: 11px; min-height: 0; }
.signin { height: 17px; line-height: 16px; padding-right: 17px; text-align: right; background: linear-gradient(#eaf5ff, #d3e7fa); }
.signin a { color: #0000e8; text-decoration: none; }
.fold { height: 27px; flex: none; display: flex; align-items: center; gap: 6px; padding-left: 9px; text-align: left; font-size: 12px; font-weight: 700; background: linear-gradient(#e7e7e7, #d0d0d0); border-top: 1px solid #666; box-shadow: inset 0 1px #f5f5f5; }
.fold.opened { height: 28px; border-bottom: 1px solid #666; }
.pack { height: 215px; flex: none; padding: 10px 9px 0 10px; display: flex; flex-direction: column; box-shadow: inset 0 2px 1px #bbb; }
.pack-head { display: flex; justify-content: space-between; align-items: center; padding-right: 3px; }
.pack h3 { margin: 0; font-size: 12px; font-weight: 600; line-height: 19px; }
.pack p { margin: 2px 0 0; line-height: 13px; }
.pack label { margin-top: 12px; line-height: 15px; color: #0000a0; }
.pack input { margin-top: 4px; height: 25px; width: 100%; border: 1px solid #999; background: #fff; }
.choose { align-self: center; margin-top: 27px; width: 111px; height: 26px; border: 1px solid #888; background: linear-gradient(#f6f6f6, #e4e4e4); color: #222; outline: 1px solid #f8f8f8; }
.hatch { flex: 1; border-top: 1px solid #666; border-bottom: 1px solid #333; background: repeating-linear-gradient(135deg, #c9c9c9 0 3px, #ececec 3px 4px); }

.taskbar {
  position: relative; display: flex; align-items: stretch; border-top: 1px solid #14283f; box-shadow: inset 0 1px #a4cbe8;
  background: linear-gradient(90deg, #1c5a92 0, #1e629b 4%, #3f9bd0 9%, #3a9ad0 35%, #2f86c6 50%, #2475bb 62%, #2c7cc2 70%, #1d66ad 78%, #1b5da6 82%, #1f4f89 84%, #1b4577 92%, #12335f 100%);
}
.aurora { position: absolute; inset: 0; width: 100%; height: 100%; }
.start { position: relative; width: 66px; margin-right: 6px; display: grid; place-items: center; }
.task { position: relative; width: 66px; margin-right: 4px; display: grid; place-items: center; }
.framed { border: 1px solid #1c4669; border-radius: 3px; box-shadow: inset 0 0 0 1px #a9d7f0; background: linear-gradient(160deg, #ffffff88 0, #ffffff33 50%, #ffffff11 52%, #ffffff33 100%); }
.stacked { width: 62px; margin-right: 7px; box-shadow: inset 0 0 0 1px #a9d7f0, 4px 0 0 -1px #8cc4e4, 5px 0 0 0 #1c4669; }
.lit { background: linear-gradient(160deg, #ffffffdd 0, #ffffff99 50%, #ffffff77 52%, #ffffffaa 100%); }
.tray { position: relative; margin-left: auto; display: flex; align-items: center; color: #fff; }
.tray > svg:nth-of-type(1) { margin-left: 23px; margin-right: 19px; }
.tray > svg:nth-of-type(2) { margin-right: 10px; }
.lang { font-size: 14px; line-height: 20px; padding-bottom: 4px; }
.tray time { width: 92px; margin-left: 6px; text-align: center; font-size: 14px; line-height: 22px; }
.peek { width: 14px; margin-left: 2px; align-self: stretch; border: 1px solid #8da9c6; background: linear-gradient(#7d93ad, #1b3f6c 40%, #2c5b8c); }
</style>
